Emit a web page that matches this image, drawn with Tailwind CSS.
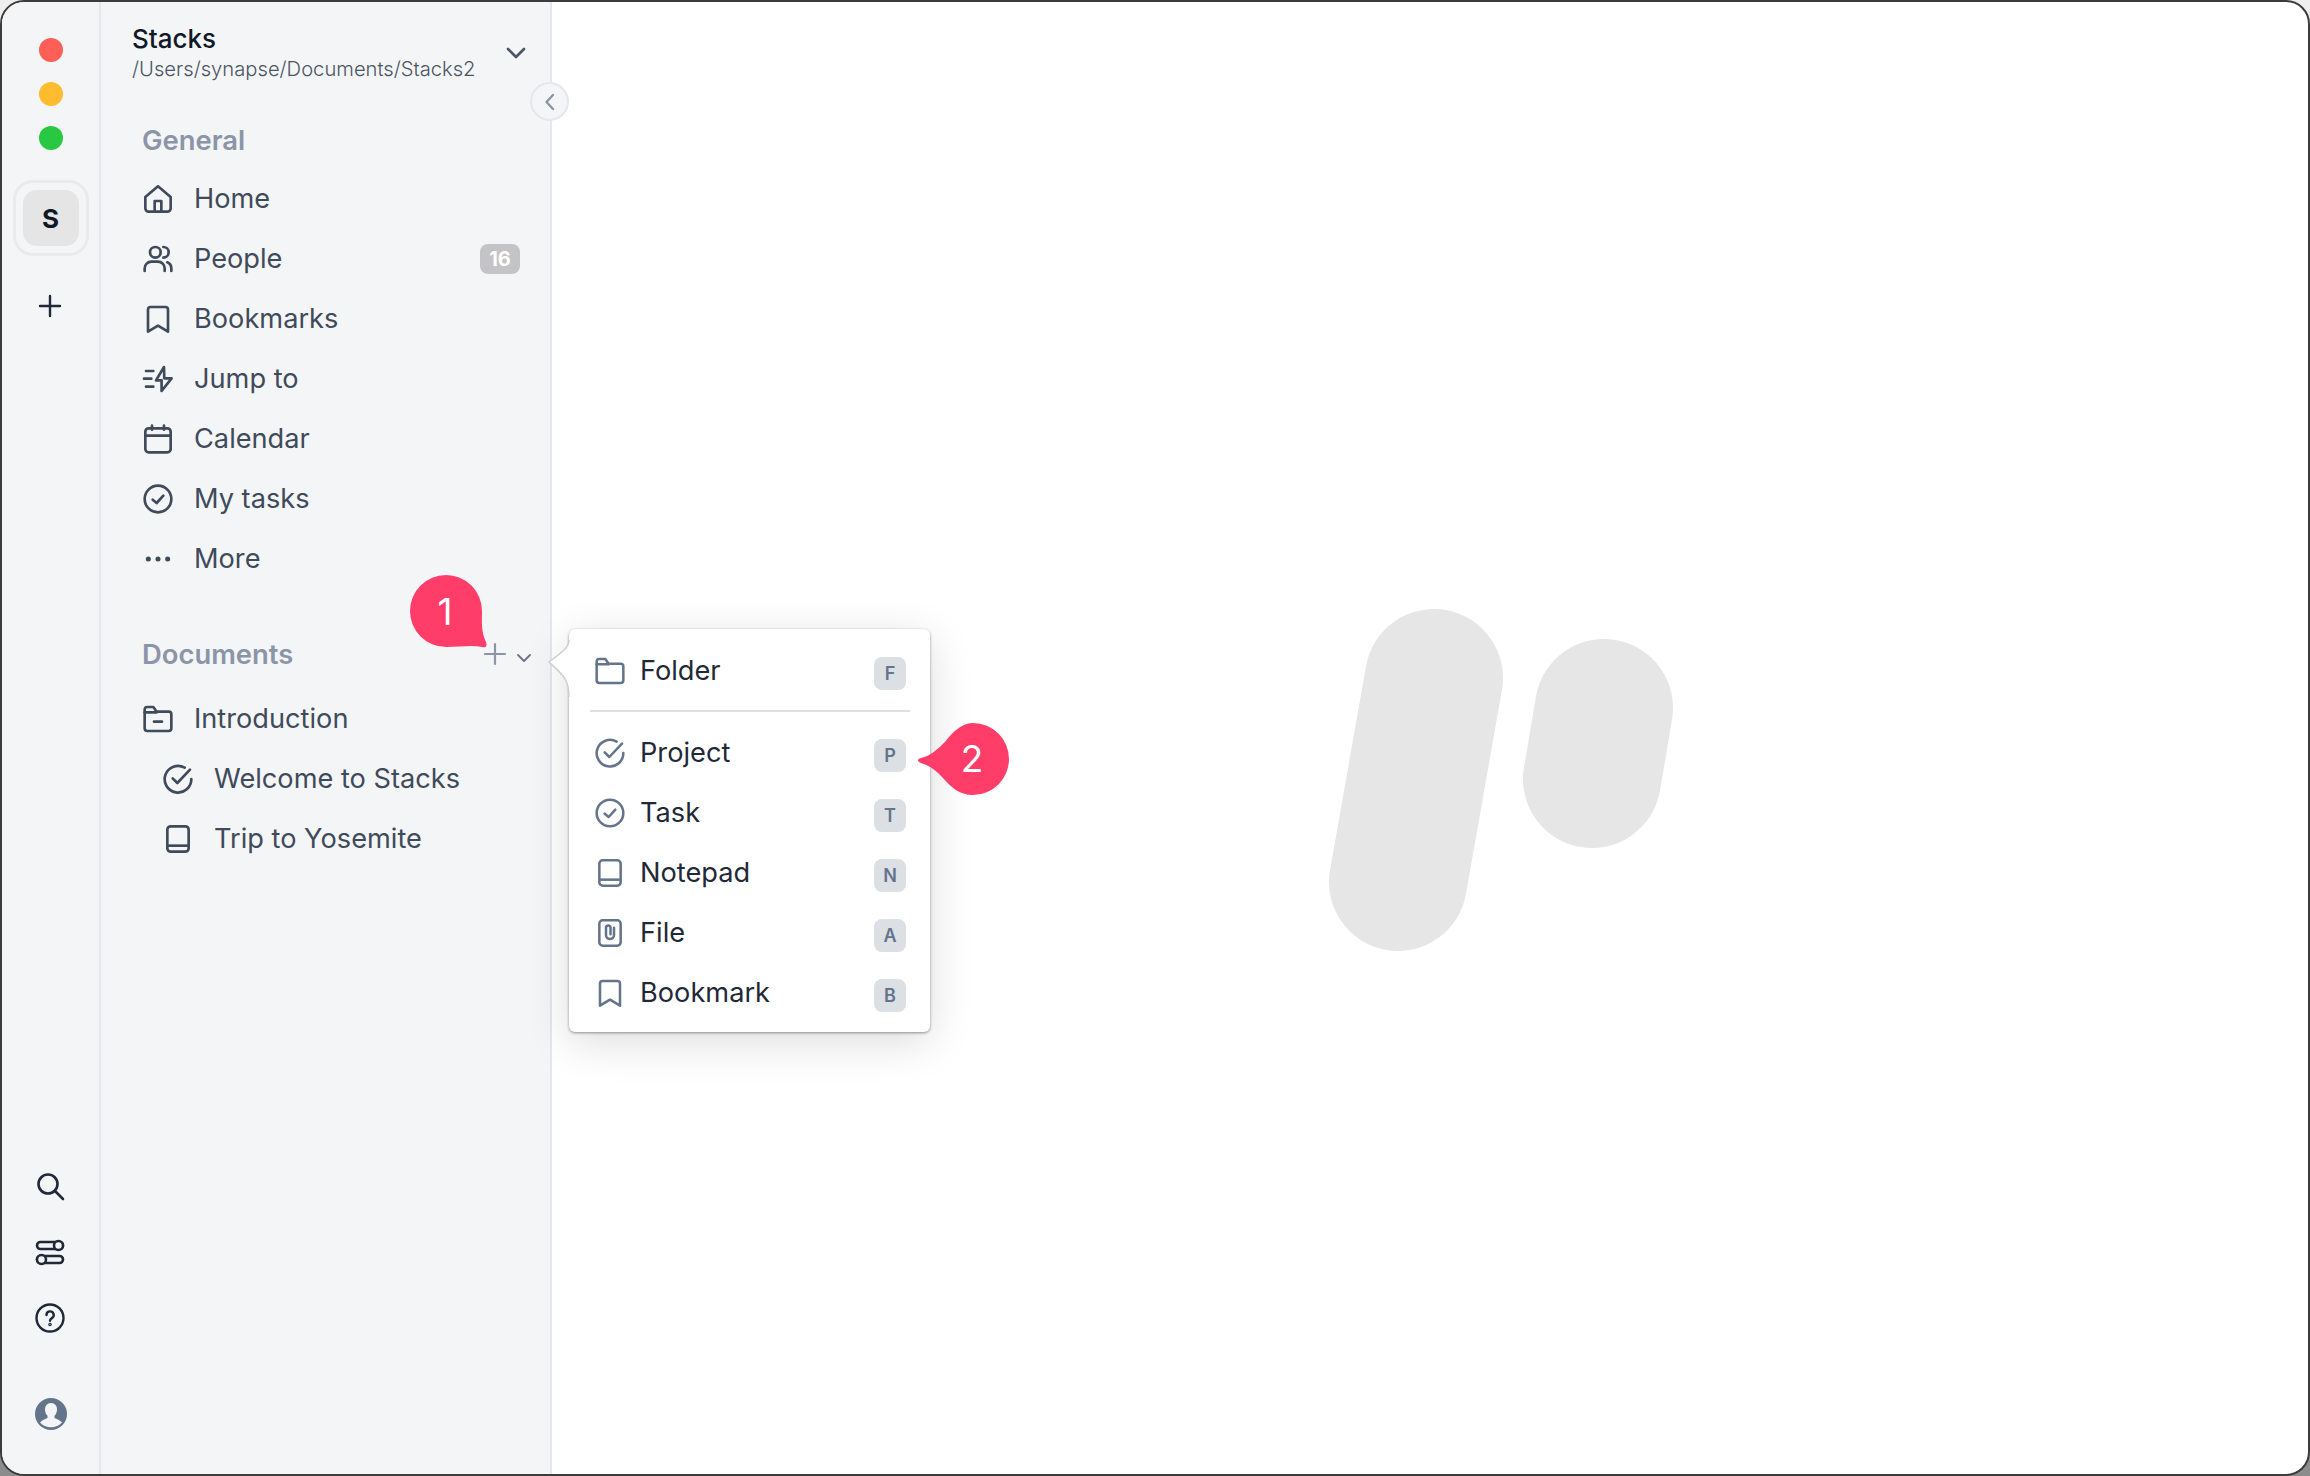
<!DOCTYPE html>
<html>
<head>
<meta charset="utf-8">
<script src="https://cdn.jsdelivr.net/npm/@tailwindcss/browser@4"></script>
</head>
<body class="bg-linear-to-b from-[#eeeeee] to-[#8c8c8c] font-['Inter',sans-serif]">
<div class="relative flex h-[1476px] w-[2310px] overflow-hidden rounded-[24px] border-2 border-[#3c3c3c] bg-white">

    <!-- rail -->
    <aside class="flex w-[99px] shrink-0 flex-col items-center border-r-2 border-[#e5e7eb] bg-[#f4f5f7] pt-[36px] pb-[44px]">
        <div class="flex flex-col items-center gap-[20px]">
            <span class="h-[24px] w-[24px] rounded-full bg-[#ff5f57]"></span>
            <span class="h-[24px] w-[24px] rounded-full bg-[#febc2e]"></span>
            <span class="h-[24px] w-[24px] rounded-full bg-[#28c840]"></span>
        </div>
        <div class="mt-[30px] flex h-[76px] w-[76px] items-center justify-center rounded-[20px] border-[3px] border-[#e9eaec]">
            <div class="flex h-[56px] w-[56px] items-center justify-center rounded-[14px] bg-[#e5e5e5] text-[26px] font-bold text-[#111827]">S</div>
        </div>
        <svg class="mt-[38px] -ml-[2px] h-[24px] w-[24px]" viewBox="0 0 24 24" fill="none" stroke="#1f2937" stroke-width="2.4" stroke-linecap="round"><path d="M12 2v20M2 12h20"/></svg>

        <div class="mt-auto flex flex-col items-center">
            <svg class="-ml-[2px] h-[30px] w-[30px]" viewBox="0 0 30 30" fill="none" stroke="#1f2937" stroke-width="2.6" stroke-linecap="round"><circle cx="13" cy="13" r="9.5"/><path d="M20 20l8 8"/></svg>
            <svg class="mt-[36px] -ml-[2px] h-[30px] w-[30px]" viewBox="0 0 30 30" fill="none" stroke="#1f2937" stroke-width="2.6"><rect x="2" y="5" width="26" height="7" rx="3.5"/><rect x="2" y="19" width="26" height="7" rx="3.5"/><circle cx="23.500" cy="8.500" r="4.500" fill="#f4f5f7"/><circle cx="6.500" cy="22.500" r="4.500" fill="#f4f5f7"/></svg>
            <svg class="mt-[36px] -ml-[2px] h-[30px] w-[30px]" viewBox="0 0 30 30" fill="none" stroke="#1f2937" stroke-width="2.4" stroke-linecap="round"><circle cx="15" cy="15" r="13.500"/><path d="M11.500 12a3.600 3.600 0 1 1 5.400 3.100c-1.200.7-1.900 1.400-1.900 2.600"/><circle cx="15" cy="21.500" r=".6"/></svg>
            <svg class="mt-[65px] ml-[1px] h-[32px] w-[32px]" viewBox="0 0 32 32"><circle cx="16" cy="16" r="16" fill="#64748b"/><path d="M16 5c-4 0-6 3-6 6.500 0 3 1.200 5 2.500 6.300v2.200c-3 1.300-6 2.500-7.500 4.500a15 15 0 0 0 22 0c-1.500-2-4.500-3.200-7.500-4.500v-2.200c1.300-1.300 2.500-3.300 2.500-6.300C22 8 20 5 16 5z" fill="#f4f5f7"/></svg>
        </div>
    </aside>

    <!-- sidebar -->
    <aside class="flex w-[451px] shrink-0 flex-col border-r-2 border-[#e5e7eb] bg-[#f4f5f7]">
        <div class="flex items-center justify-between pt-[22px] pr-[22px] pl-[31px]">
            <div>
                <div class="text-[26px] leading-[30px] font-medium text-[#111827]">Stacks</div>
                <div class="mt-[2px] text-[20.200px] leading-[26px] font-light text-[#4b5563]">/Users/synapse/Documents/Stacks2</div>
            </div>
            <svg class="h-[24px] w-[24px]" viewBox="0 0 24 24" fill="none" stroke="#4b5563" stroke-width="2.600" stroke-linecap="round" stroke-linejoin="round"><path d="M4 8l8 8 8-8"/></svg>
        </div>

        <div class="mt-[41px] pl-[41px] text-[27.400px] leading-[34px] font-semibold text-[#8b95a7]">General</div>
        <nav class="mt-[12px] flex flex-col pr-[30px] pl-[41px] text-[27.200px] text-[#3f4a5a]">
            <a class="flex h-[60px] items-center gap-[20px]">
                <svg class="h-[32px] w-[32px]" viewBox="0 0 24 24" fill="none" stroke="#3f4a5a" stroke-width="2" stroke-linejoin="round"><path d="M2.500 10.500 12 2.500l9.500 8V19a2.500 2.500 0 0 1-2.500 2.500H5A2.500 2.500 0 0 1 2.500 19z"/><path d="M9.500 21.500v-8h5v8"/></svg>
                Home
            </a>
            <a class="flex h-[60px] items-center gap-[20px]">
                <svg class="h-[32px] w-[32px]" viewBox="0 0 24 24" fill="none" stroke="#3f4a5a" stroke-width="2" stroke-linecap="round"><circle cx="10" cy="7" r="4"/><path d="M2 21v-2a5 5 0 0 1 5-5h5a5 5 0 0 1 5 5v2"/><path d="M16 3a4 4 0 0 1 0 8M19 14.500a5 5 0 0 1 3 4.500v2"/></svg>
                People
                <span class="ml-auto flex h-[30px] w-[40px] items-center justify-center rounded-[8px] bg-[#c4c4c6] text-[20px] font-bold text-white">16</span>
            </a>
            <a class="flex h-[60px] items-center gap-[20px]">
                <svg class="h-[32px] w-[32px]" viewBox="0 0 24 24" fill="none" stroke="#3f4a5a" stroke-width="2" stroke-linejoin="round"><path d="M4.500 5a2 2 0 0 1 2-2h11a2 2 0 0 1 2 2v16.500L12 17l-7.500 4.500z"/></svg>
                Bookmarks
            </a>
            <a class="flex h-[60px] items-center gap-[20px]">
                <svg class="h-[32px] w-[32px]" viewBox="0 0 24 24" fill="none" stroke="#3f4a5a" stroke-width="2" stroke-linecap="round" stroke-linejoin="round"><path d="M16.500 3 10.500 13h4.200L14.700 21 22.200 11.500h-5.500z"/><path d="M3 6h5.500M1.500 11.750h5.500M3 17.750h5.500"/></svg>
                Jump to
            </a>
            <a class="flex h-[60px] items-center gap-[20px]">
                <svg class="h-[32px] w-[32px]" viewBox="0 0 24 24" fill="none" stroke="#3f4a5a" stroke-width="2" stroke-linecap="round"><rect x="2.500" y="4" width="19" height="18" rx="2.500"/><path d="M2.500 9.500h19M7.500 2v3M16.500 2v3"/></svg>
                Calendar
            </a>
            <a class="flex h-[60px] items-center gap-[20px]">
                <svg class="h-[32px] w-[32px]" viewBox="0 0 24 24" fill="none" stroke="#3f4a5a" stroke-width="2" stroke-linecap="round" stroke-linejoin="round"><circle cx="12" cy="12" r="10"/><path d="M8 12.500l3 2.500 5-5.500"/></svg>
                My tasks
            </a>
            <a class="flex h-[60px] items-center gap-[20px]">
                <svg class="h-[32px] w-[32px]" viewBox="0 0 24 24" fill="#3f4a5a"><circle cx="4.750" cy="12" r="1.900"/><circle cx="12" cy="12" r="1.900"/><circle cx="19.250" cy="12" r="1.900"/></svg>
                More
            </a>
        </nav>

        <div class="mt-[48px] flex h-[34px] items-center pr-[18px] pl-[41px]">
            <span class="text-[27.400px] leading-[34px] font-semibold text-[#8b95a7]">Documents</span>
            <svg class="ml-auto h-[24px] w-[24px]" viewBox="0 0 24 24" fill="none" stroke="#8b95a7" stroke-width="2.200" stroke-linecap="round"><path d="M12 2v20M2 12h20"/></svg>
            <svg class="mt-[8px] ml-[9px] h-[16px] w-[16px]" viewBox="0 0 16 16" fill="none" stroke="#6b7280" stroke-width="1.800" stroke-linecap="round" stroke-linejoin="round"><path d="M2 5l6 6 6-6"/></svg>
        </div>
        <nav class="mt-[18px] flex flex-col pl-[41px] text-[27.200px] text-[#3f4a5a]">
            <a class="flex h-[60px] items-center gap-[20px]">
                <svg class="h-[32px] w-[32px]" viewBox="0 0 24 24" fill="none" stroke="#3f4a5a" stroke-width="2" stroke-linejoin="round" stroke-linecap="round"><path d="M2 5a2 2 0 0 1 2-2h4.500l2.500 3.500h9a2 2 0 0 1 2 2V19a2 2 0 0 1-2 2H4a2 2 0 0 1-2-2z"/><path d="M2 7h9M9 14h6"/></svg>
                Introduction
            </a>
            <a class="ml-[20px] flex h-[60px] items-center gap-[20px]">
                <svg class="h-[32px] w-[32px]" viewBox="0 0 24 24" fill="none" stroke="#3f4a5a" stroke-width="2" stroke-linecap="round" stroke-linejoin="round"><path d="M17 3.500A10 10 0 1 0 22 12"/><path d="M8 11.500l3.500 3.500L21 5"/></svg>
                Welcome to Stacks
            </a>
            <a class="ml-[20px] flex h-[60px] items-center gap-[20px]">
                <svg class="h-[32px] w-[32px]" viewBox="0 0 24 24" fill="none" stroke="#3f4a5a" stroke-width="2" stroke-linejoin="round"><rect x="4" y="2.500" width="16" height="19" rx="2.500"/><path d="M4 17h16"/></svg>
                Trip to Yosemite
            </a>
        </nav>
    </aside>

    <!-- main -->
    <main class="flex-1 pt-[607px] pl-[777px]">
        <svg class="h-[344px] w-[346px]" viewBox="1329 609 346 344" fill="none" stroke="#e6e6e6" stroke-width="138" stroke-linecap="round"><path d="M1434 678 1398 882"/><path d="M1604 708 1592 779"/></svg>
    </main>

    <!-- collapse button -->
    <button class="absolute top-[80px] left-[528px] flex h-[39px] w-[39px] items-center justify-center rounded-full border-2 border-[#e5e7eb] bg-[#f4f5f7]">
        <svg class="h-[20px] w-[20px]" viewBox="0 0 20 20" fill="none" stroke="#8b95a7" stroke-width="2.400" stroke-linecap="round" stroke-linejoin="round"><path d="M13 3l-6.500 7 6.500 7"/></svg>
    </button>

    <!-- new item menu -->
    <div class="absolute top-[627px] left-[567px] w-[361px] rounded-[6px] bg-white pt-[12px] pr-[24px] pb-[9px] pl-[25px] text-[27.200px] text-[#1f2937] shadow-[0_1px_3px_rgba(0,0,0,0.4),0_10px_44px_rgba(0,0,0,0.14)]">
        <svg class="absolute top-[10px] left-[-21px] h-[60px] w-[24px]" viewBox="0 0 24 60" fill="white" stroke="none"><path d="M21 0C21 8 17 12 1 23 15 36 21 40 21 60h3V0z"/><path d="M21 1C21 8 16 12 1 23 15 36 21 40 21 58" fill="none" stroke="#cfcfcf" stroke-width="1.500"/></svg>
        <div class="flex h-[60px] items-center gap-[14px]">
            <svg class="h-[32px] w-[32px]" viewBox="0 0 24 24" fill="none" stroke="#64748b" stroke-width="1.900" stroke-linejoin="round" stroke-linecap="round"><path d="M2 5a2 2 0 0 1 2-2h4.500l2.500 3.500h9a2 2 0 0 1 2 2V19a2 2 0 0 1-2 2H4a2 2 0 0 1-2-2z"/><path d="M2 7h9"/></svg>
            Folder
            <span class="mt-[5px] ml-auto flex h-[33px] w-[32px] items-center justify-center rounded-[8px] bg-[#dcdfe4] text-[18px] font-semibold text-[#64748b]">F</span>
        </div>
        <hr class="mt-[9px] mr-[-4px] mb-[11px] ml-[-4px] border-t-2 border-[#e0e0e0]">
        <div class="flex h-[60px] items-center gap-[14px]">
            <svg class="h-[32px] w-[32px]" viewBox="0 0 24 24" fill="none" stroke="#64748b" stroke-width="1.900" stroke-linecap="round" stroke-linejoin="round"><path d="M17 3.500A10 10 0 1 0 22 12"/><path d="M8 11.500l3.500 3.500L21 5"/></svg>
            Project
            <span class="mt-[5px] ml-auto flex h-[33px] w-[32px] items-center justify-center rounded-[8px] bg-[#dcdfe4] text-[18px] font-semibold text-[#64748b]">P</span>
        </div>
        <div class="flex h-[60px] items-center gap-[14px]">
            <svg class="h-[32px] w-[32px]" viewBox="0 0 24 24" fill="none" stroke="#64748b" stroke-width="1.900" stroke-linecap="round" stroke-linejoin="round"><circle cx="12" cy="12" r="10"/><path d="M8 12.500l3 2.500 5-5.500"/></svg>
            Task
            <span class="mt-[5px] ml-auto flex h-[33px] w-[32px] items-center justify-center rounded-[8px] bg-[#dcdfe4] text-[18px] font-semibold text-[#64748b]">T</span>
        </div>
        <div class="flex h-[60px] items-center gap-[14px]">
            <svg class="h-[32px] w-[32px]" viewBox="0 0 24 24" fill="none" stroke="#64748b" stroke-width="1.900" stroke-linejoin="round"><rect x="4" y="2.500" width="16" height="19" rx="2.500"/><path d="M4 17h16"/></svg>
            Notepad
            <span class="mt-[5px] ml-auto flex h-[33px] w-[32px] items-center justify-center rounded-[8px] bg-[#dcdfe4] text-[18px] font-semibold text-[#64748b]">N</span>
        </div>
        <div class="flex h-[60px] items-center gap-[14px]">
            <svg class="h-[32px] w-[32px]" viewBox="0 0 24 24" fill="none" stroke="#64748b" stroke-width="1.900" stroke-linecap="round"><rect x="4" y="2.500" width="16" height="19" rx="2.500"/><path d="M15 8v5.500a3 3 0 0 1-6 0V8a1.700 1.700 0 0 1 3.400 0v5"/></svg>
            File
            <span class="mt-[5px] ml-auto flex h-[33px] w-[32px] items-center justify-center rounded-[8px] bg-[#dcdfe4] text-[18px] font-semibold text-[#64748b]">A</span>
        </div>
        <div class="flex h-[60px] items-center gap-[14px]">
            <svg class="h-[32px] w-[32px]" viewBox="0 0 24 24" fill="none" stroke="#64748b" stroke-width="1.900" stroke-linejoin="round"><path d="M4.500 5a2 2 0 0 1 2-2h11a2 2 0 0 1 2 2v16.500L12 17l-7.500 4.500z"/></svg>
            Bookmark
            <span class="mt-[5px] ml-auto flex h-[33px] w-[32px] items-center justify-center rounded-[8px] bg-[#dcdfe4] text-[18px] font-semibold text-[#64748b]">B</span>
        </div>
    </div>

    <!-- callouts -->
    <div class="absolute top-[573px] left-[408px] h-[74px] w-[80px]">
        <svg class="absolute inset-0" width="80" height="74" viewBox="0 0 80 74" fill="#ff3d68"><path d="M36 0A36 36 0 0 1 72 36C72 46 71 56 75.500 66 78 71 76 73 72 72 62 70 50 72 36 72A36 36 0 0 1 36 0Z"/></svg>
        <span class="absolute top-[1px] left-[-1px] flex h-[72px] w-[72px] items-center justify-center text-[37px] text-white">1</span>
    </div>
    <div class="absolute top-[721px] left-[915px] h-[72px] w-[92px]">
        <svg class="absolute inset-0" width="92" height="72" viewBox="0 0 92 72" fill="#ff3d68"><path d="M56 0A36 36 0 1 1 56 72C42 72 34 64 26 55 19 47 11 42 4 40 0 38 0 36 4 35 13 33 21 26 28 19 35 10 44 0 56 0Z"/></svg>
        <span class="absolute top-0 left-[19px] flex h-[72px] w-[72px] items-center justify-center text-[37px] text-white">2</span>
    </div>
</div>
</body>
</html>
